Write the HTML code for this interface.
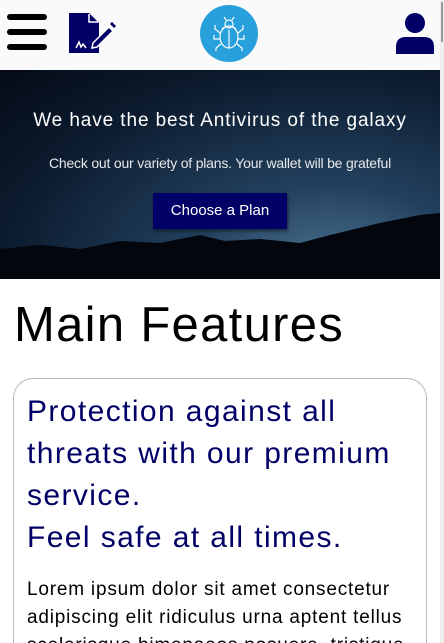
<!DOCTYPE html>
<html><head><meta charset="utf-8"><style>
*{margin:0;padding:0;box-sizing:border-box}
html,body{width:444px;height:643px;overflow:hidden}
body{background:#fff;font-family:"Liberation Sans",sans-serif;position:relative}
.hdr{position:absolute;left:0;top:0;width:440px;height:70px;background:#fafafa}
.sb{position:absolute;right:0;top:0;width:4px;height:643px;background:#eee}
.sb:after{content:"";position:absolute;left:1px;top:2px;width:2px;height:40px;background:#999}
.hero{position:absolute;left:0;top:70px;width:440px;height:209px;background:radial-gradient(ellipse at 75% 95%,#4d7393 0%,#22405d 30%,#0c1b2e 70%,#050b16 100%);overflow:hidden}
.hero svg.m{position:absolute;left:0;bottom:0}
.t{position:absolute;white-space:nowrap}
.line{position:absolute;left:27px;white-space:nowrap}
</style></head><body>
<div class="hdr">
<div style="position:absolute;left:7px;top:14px;width:40px;height:6px;border-radius:3px;background:#000"></div>
<div style="position:absolute;left:7px;top:29px;width:40px;height:6px;border-radius:3px;background:#000"></div>
<div style="position:absolute;left:7px;top:44px;width:40px;height:6px;border-radius:3px;background:#000"></div>
<svg style="position:absolute;left:68px;top:12px" width="48" height="42" viewBox="0 0 48 42">
<path d="M1 1H21L31 11V41H1Z" fill="#000066"/>
<path d="M21 2V10H30" stroke="#fff" stroke-width="1.5" fill="none"/>
<path d="M25 31L41 15L45 19L29 35L24 36Z" fill="#000066" stroke="#fff" stroke-width="1.5"/>
<path d="M42 12L44 10L48 14L46 16Z" fill="#000066"/>
<path d="M8 36L11 30L13 35L15 32L18 36" stroke="#fff" stroke-width="1.5" fill="none"/>
</svg>
<div style="position:absolute;left:200px;top:5px;width:58px;height:57px;border-radius:50%;background:#27a0dc"></div>
<svg style="position:absolute;left:210px;top:15px" width="38" height="38" viewBox="0 0 38 38" fill="none" stroke="#fff" stroke-width="1.2">
<ellipse cx="19" cy="22" rx="9" ry="11"/><path d="M12 14Q19 8 26 14"/><path d="M19 15V33"/><circle cx="19" cy="9" r="4"/>
<path d="M10 18L5 14V10M10 24H4V20M11 29L6 33V36M28 18L33 14V10M28 24H34V20M27 29L32 33V36M16 5L14 2M22 5L24 2"/>
</svg>
<svg style="position:absolute;left:396px;top:12px" width="38" height="42" viewBox="0 0 38 42">
<circle cx="19" cy="11" r="10" fill="#000066"/><path d="M0 42V35Q0 25 10 25H28Q38 25 38 35V42Z" fill="#000066"/>
</svg>
</div>
<div class="hero">
<svg class="m" width="440" height="80" viewBox="0 0 440 80"><path d="M0 50L40 46L80 50L120 42L160 44L200 36L225 42L260 40L300 44L330 36L380 24L420 16L440 14V80H0Z" fill="#03060c"/></svg>
<div class="t" style="left:0;width:440px;text-align:center;top:40px;color:#fff;font-size:19px;letter-spacing:0.9px">We have the best Antivirus of the galaxy</div>
<div class="t" style="left:0;width:440px;text-align:center;top:85px;color:#e8e8e8;font-size:14px;letter-spacing:-0.2px">Check out our variety of plans. Your wallet will be grateful</div>
<div style="position:absolute;left:153px;top:123px;width:134px;height:36px;background:#000066;color:#fff;font-size:15px;line-height:36px;text-align:center;box-shadow:1px 2px 3px rgba(0,0,0,.5)">Choose a Plan</div>
</div>
<div class="t" style="left:14px;top:297px;font-size:49px;color:#000;line-height:56px;letter-spacing:1.3px">Main Features</div>
<div style="position:absolute;left:13px;top:378px;width:414px;height:265px;border:1px solid #bbb;border-bottom:none;border-radius:20px 20px 0 0"></div>
<div style="color:#000066;font-size:30px;letter-spacing:1.4px">
<div class="line" style="top:395px">Protection against all</div>
<div class="line" style="top:437px">threats with our premium</div>
<div class="line" style="top:479px">service.</div>
<div class="line" style="top:521px">Feel safe at all times.</div>
</div>
<div style="color:#000;font-size:19px;letter-spacing:0.8px">
<div class="line" style="top:579px">Lorem ipsum dolor sit amet consectetur</div>
<div class="line" style="top:607px">adipiscing elit ridiculus urna aptent tellus</div>
<div class="line" style="top:635px">scelerisque himenaeos posuere, tristique</div>
</div>
<div class="sb"></div>
</body></html>
